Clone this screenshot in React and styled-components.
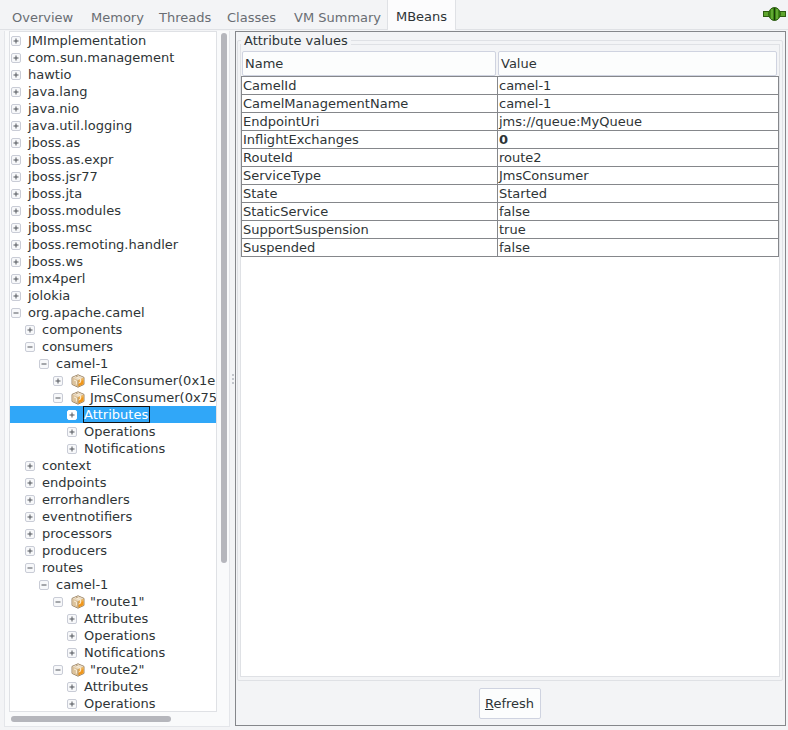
import React from "react";
import styled, { createGlobalStyle } from "styled-components";

const treeRows = [
  { label: "JMImplementation", level: 0 },
  { label: "com.sun.management", level: 0 },
  { label: "hawtio", level: 0 },
  { label: "java.lang", level: 0 },
  { label: "java.nio", level: 0 },
  { label: "java.util.logging", level: 0 },
  { label: "jboss.as", level: 0 },
  { label: "jboss.as.expr", level: 0 },
  { label: "jboss.jsr77", level: 0 },
  { label: "jboss.jta", level: 0 },
  { label: "jboss.modules", level: 0 },
  { label: "jboss.msc", level: 0 },
  { label: "jboss.remoting.handler", level: 0 },
  { label: "jboss.ws", level: 0 },
  { label: "jmx4perl", level: 0 },
  { label: "jolokia", level: 0 },
  { label: "org.apache.camel", level: 0, open: true },
  { label: "components", level: 1 },
  { label: "consumers", level: 1, open: true },
  { label: "camel-1", level: 2, open: true },
  { label: "FileConsumer(0x1e", level: 3, bean: true },
  { label: "JmsConsumer(0x75", level: 3, bean: true, open: true },
  { label: "Attributes", level: 4, selected: true },
  { label: "Operations", level: 4 },
  { label: "Notifications", level: 4 },
  { label: "context", level: 1 },
  { label: "endpoints", level: 1 },
  { label: "errorhandlers", level: 1 },
  { label: "eventnotifiers", level: 1 },
  { label: "processors", level: 1 },
  { label: "producers", level: 1 },
  { label: "routes", level: 1, open: true },
  { label: "camel-1", level: 2, open: true },
  { label: '"route1"', level: 3, bean: true, open: true },
  { label: "Attributes", level: 4 },
  { label: "Operations", level: 4 },
  { label: "Notifications", level: 4 },
  { label: '"route2"', level: 3, bean: true, open: true },
  { label: "Attributes", level: 4 },
  { label: "Operations", level: 4 },
];

const attributes = [
  ["CamelId", "camel-1"],
  ["CamelManagementName", "camel-1"],
  ["EndpointUri", "jms://queue:MyQueue"],
  ["InflightExchanges", "0", true],
  ["RouteId", "route2"],
  ["ServiceType", "JmsConsumer"],
  ["State", "Started"],
  ["StaticService", "false"],
  ["SupportSuspension", "true"],
  ["Suspended", "false"],
];

const tabs = [
  { label: "Overview", width: 79 },
  { label: "Memory", width: 68 },
  { label: "Threads", width: 68 },
  { label: "Classes", width: 67 },
  { label: "VM Summary", width: 101 },
];

const BeanIcon = () => (
  <svg width="14" height="14" viewBox="0 0 14 14">
    <path d="M7 0.8 L13 3.4 V10.4 L7 13.2 L1 10.4 V3.4 Z" fill="#e3c9a2" stroke="#9a8468" strokeWidth="1" />
    <path d="M1.5 3.5 L7 1.3 L12.5 3.5 L7 6 Z" fill="#eadcc6" />
    <path d="M1.4 3.8 L7 6.2 V12.7 L1.4 10.2 Z" fill="#dcc39c" />
    <path d="M7 6.2 L12.6 3.8 V10.2 L7 12.7 Z" fill="#eeb257" />
    <path d="M7.6 8.2 L12.4 6 V10 L7.6 12.2 Z" fill="#f0961a" />
    <path d="M4 2.4 L9.6 4.9 M9.6 4.9 V8.2 L7.4 9.2 M3 6 L5.4 7 V10.4" stroke="#fbeed6" strokeWidth="1" fill="none" />
    <path d="M4.4 3 L6.8 2.2 M7 6.2 V12.7" stroke="#a88a62" strokeWidth="0.7" fill="none" />
  </svg>
);

const ConnectedIcon = () => (
  <svg width="23" height="14" viewBox="0 0 23 14">
    <rect x="0.5" y="4.5" width="22" height="5" fill="#5fa52e" stroke="#2f5e12" />
    <ellipse cx="11.5" cy="7" rx="5.8" ry="6.5" fill="#3f8a16" stroke="#2b5a10" />
    <path d="M11.5 0.8 V13.2" stroke="#173c06" strokeWidth="1.2" />
    <path d="M9 2 V12 M14 2 V12" stroke="#86c850" strokeWidth="1" />
  </svg>
);

const Toggle = ({ open, selected }) => (
  <ToggleBox $selected={selected}>
    <svg width="6" height="6" viewBox="0 0 6 6">
      <path d="M0.5 3 H5.5" stroke="#50545a" strokeWidth="1" />
      {!open && <path d="M3 0.5 V5.5" stroke="#50545a" strokeWidth="1" />}
    </svg>
  </ToggleBox>
);

const App = () => (
  <Window>
    <GlobalStyle />
    <TabBar>
      {tabs.map((tab) => (
        <Tab key={tab.label} $width={tab.width}>
          {tab.label}
        </Tab>
      ))}
      <ActiveTab>MBeans</ActiveTab>
      <Status>
        <ConnectedIcon />
      </Status>
    </TabBar>
    <Content>
      <TreePane>
        <TreeRow>
          <TreeBox>
            {treeRows.map((row, i) => (
              <Row key={i} $level={row.level} $selected={row.selected}>
                <Toggle open={row.open} selected={row.selected} />
                {row.bean && (
                  <BeanSlot>
                    <BeanIcon />
                  </BeanSlot>
                )}
                <RowLabel $selected={row.selected} $bean={row.bean}>
                  {row.label}
                </RowLabel>
              </Row>
            ))}
          </TreeBox>
          <VTrack>
            <VThumb />
          </VTrack>
        </TreeRow>
        <HTrack>
          <HThumb />
        </HTrack>
      </TreePane>
      <Splitter>
        <Grip />
      </Splitter>
      <DetailPane>
        <GroupBox>
          <GroupTitle>Attribute values</GroupTitle>
          <GroupInner>
            <HeaderRow>
              <HeaderCell $width={254}>Name</HeaderCell>
              <HeaderCell $width={279}>Value</HeaderCell>
            </HeaderRow>
            <Table>
              {attributes.map(([name, value, bold]) => (
                <TableRow key={name}>
                  <NameCell>{name}</NameCell>
                  <ValueCell $bold={bold}>{value}</ValueCell>
                </TableRow>
              ))}
            </Table>
          </GroupInner>
        </GroupBox>
        <ButtonRow>
          <RefreshButton>
            <u>R</u>efresh
          </RefreshButton>
        </ButtonRow>
      </DetailPane>
    </Content>
  </Window>
);

export default App;

const GlobalStyle = createGlobalStyle`
  html, body {
    margin: 0;
    padding: 0;
    background: #f3f4f6;
  }
  * {
    box-sizing: border-box;
  }
`;

const Window = styled.div`
  width: 788px;
  height: 730px;
  overflow: hidden;
  background: #f3f4f6;
  font-family: "DejaVu Sans", sans-serif;
  font-size: 13px;
  color: #2e3436;
  display: flex;
  flex-direction: column;
`;

const TabBar = styled.div`
  height: 30px;
  flex: none;
  display: flex;
  align-items: stretch;
  padding-left: 4px;
  border-bottom: 1px solid #dfe1e5;
`;

const Tab = styled.div`
  width: ${(p) => p.$width}px;
  flex: none;
  padding: 10px 0 0 8px;
  color: #696d73;
`;

const ActiveTab = styled.div`
  width: 69px;
  height: 30px;
  flex: none;
  background: #fcfcfd;
  border-left: 1px solid #dfe1e5;
  border-right: 1px solid #dfe1e5;
  padding-top: 9px;
  text-align: center;
  color: #2e3436;
`;

const Status = styled.div`
  margin-left: auto;
  padding: 7px 2px 0 0;
`;

const Content = styled.div`
  flex: 1;
  display: flex;
  min-height: 0;
  padding: 1px 1px 3px 4px;
`;

const TreePane = styled.div`
  width: 226px;
  flex: none;
  display: flex;
  flex-direction: column;
  border: 1px solid #e4e6ea;
  border-top: 0;
  background: #f9fafb;
`;

const TreeRow = styled.div`
  flex: 1;
  display: flex;
  min-height: 0;
`;

const TreeBox = styled.div`
  width: 208px;
  flex: none;
  margin-left: 4px;
  background: #ffffff;
  border: 1px solid #dfe1e5;
  overflow: hidden;
`;

const Row = styled.div`
  height: 17px;
  display: flex;
  align-items: center;
  white-space: nowrap;
  padding-left: ${(p) => 1 + p.$level * 14}px;
  background: ${(p) => (p.$selected ? "#30a7f8" : "transparent")};
`;

const ToggleBox = styled.span`
  width: 10px;
  height: 10px;
  flex: none;
  display: inline-flex;
  align-items: center;
  justify-content: center;
  border: 1px solid ${(p) => (p.$selected ? "#ffffff" : "#c9ccd6")};
  border-radius: 2px;
  background: ${(p) => (p.$selected ? "#ffffff" : "#f7f8fa")};
`;

const BeanSlot = styled.span`
  display: inline-flex;
  margin-left: 8px;
  flex: none;
`;

const RowLabel = styled.span`
  margin-left: ${(p) => (p.$bean ? 5 : p.$selected ? 6 : 7)}px;
  ${(p) =>
    p.$selected
      ? "color: #ffffff; border: 1px solid #111111; height: 17px; line-height: 15px; width: 67px;"
      : "color: #2e3436;"}
`;

const VTrack = styled.div`
  flex: none;
  width: 10px;
  padding: 2px 0 0 4px;
`;

const VThumb = styled.div`
  width: 6px;
  height: 530px;
  border-radius: 3px;
  background: #b5b6bc;
`;

const HTrack = styled.div`
  height: 14px;
  flex: none;
  padding: 4px 0 0 6px;
`;

const HThumb = styled.div`
  width: 160px;
  height: 6px;
  border-radius: 3px;
  background: #b5b6bc;
`;

const Splitter = styled.div`
  width: 5px;
  flex: none;
  display: flex;
  align-items: center;
  justify-content: center;
`;

const Grip = styled.div`
  width: 2px;
  height: 11px;
  background: repeating-linear-gradient(#c3c6cc 0 2px, transparent 2px 4px);
`;

const DetailPane = styled.div`
  width: 551px;
  flex: none;
  height: 695px;
  display: flex;
  flex-direction: column;
  border: 1px solid #85878b;
  padding: 8px 2px 0 1px;
`;

const GroupBox = styled.div`
  position: relative;
  flex: 1;
  min-height: 0;
  border: 1px solid #dfe1e5;
  border-radius: 2px;
  padding: 3px 2px;
`;

const GroupTitle = styled.div`
  position: absolute;
  top: -8px;
  left: 3px;
  padding: 0 3px;
  background: #f3f4f6;
  color: #2e3436;
`;

const GroupInner = styled.div`
  height: 100%;
  background: #ffffff;
  border: 1px solid #dfe1e5;
`;

const HeaderRow = styled.div`
  display: flex;
  height: 31px;
  background: #f3f4f6;
  padding: 6px 0 0 1px;
`;

const HeaderCell = styled.div`
  width: ${(p) => p.$width}px;
  height: 25px;
  flex: none;
  margin-right: 2px;
  background: #fcfdfd;
  border: 1px solid #cfd3e0;
  border-radius: 2px;
  padding: 4px 2px;
  &:last-child {
    margin-right: 0;
  }
`;

const Table = styled.div`
  border-top: 1px solid #85878b;
  border-left: 1px solid #85878b;
  width: 538px;
`;

const TableRow = styled.div`
  display: flex;
  height: 18px;
  border-bottom: 1px solid #85878b;
`;

const NameCell = styled.div`
  width: 256px;
  flex: none;
  border-right: 1px solid #85878b;
  padding-left: 1px;
  line-height: 17px;
`;

const ValueCell = styled.div`
  flex: 1;
  border-right: 1px solid #85878b;
  padding-left: 1px;
  line-height: 17px;
  font-weight: ${(p) => (p.$bold ? 700 : 400)};
`;

const ButtonRow = styled.div`
  height: 44px;
  flex: none;
  display: flex;
  justify-content: center;
  padding-top: 7px;
  padding-right: 1px;
`;

const RefreshButton = styled.button`
  width: 62px;
  height: 31px;
  padding: 0;
  font: inherit;
  color: #2e3436;
  background: #fcfdfd;
  border: 1px solid #cfd3e0;
  border-radius: 2px;
`;
